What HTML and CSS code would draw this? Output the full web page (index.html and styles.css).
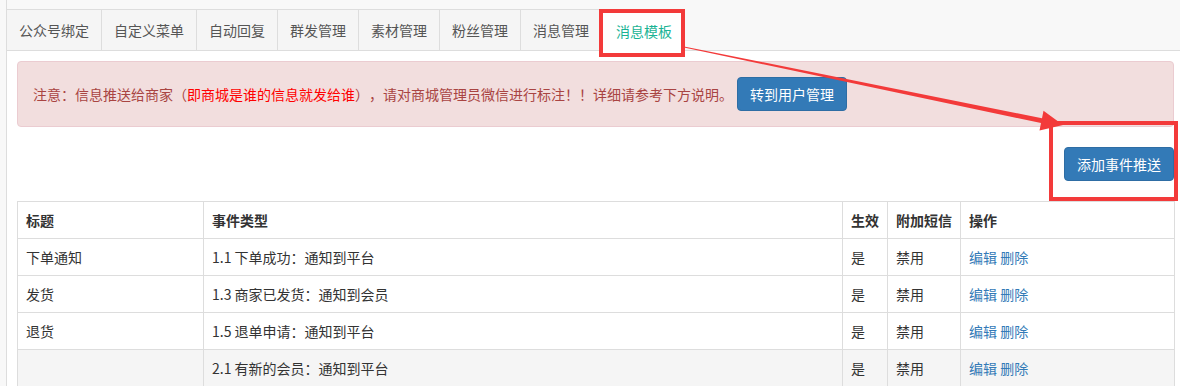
FILE: index.html
```html
<!DOCTYPE html>
<html lang="zh-CN">
<head>
<meta charset="utf-8">
<title>消息模板</title>
<link rel="stylesheet" href="styles.css">
</head>
<body>
<div class="page">
  <ul class="tabs">
    <li class="tab">公众号绑定</li>
    <li class="tab">自定义菜单</li>
    <li class="tab">自动回复</li>
    <li class="tab">群发管理</li>
    <li class="tab">素材管理</li>
    <li class="tab">粉丝管理</li>
    <li class="tab">消息管理</li>
    <li class="tab active">消息模板</li>
  </ul>
  <div class="content">
    <div class="alert">
      <span>注意：信息推送给商家（<span class="hl">即商城是谁的信息就发给谁</span>），请对商城管理员微信进行标注！！详细请参考下方说明。</span>
      <button class="btn">转到用户管理</button>
    </div>
    <div class="toolbar">
      <button class="btn">添加事件推送</button>
    </div>
    <table class="grid">
      <colgroup>
        <col class="c1"><col class="c2"><col class="c3"><col class="c4"><col class="c5">
      </colgroup>
      <thead>
        <tr><th>标题</th><th>事件类型</th><th>生效</th><th>附加短信</th><th>操作</th></tr>
      </thead>
      <tbody>
        <tr><td>下单通知</td><td>1.1 下单成功：通知到平台</td><td>是</td><td>禁用</td><td><a>编辑</a> <a>删除</a></td></tr>
        <tr><td>发货</td><td>1.3 商家已发货：通知到会员</td><td>是</td><td>禁用</td><td><a>编辑</a> <a>删除</a></td></tr>
        <tr><td>退货</td><td>1.5 退单申请：通知到平台</td><td>是</td><td>禁用</td><td><a>编辑</a> <a>删除</a></td></tr>
        <tr class="hover"><td></td><td>2.1 有新的会员：通知到平台</td><td>是</td><td>禁用</td><td><a>编辑</a> <a>删除</a></td></tr>
      </tbody>
    </table>
  </div>
</div>
<svg class="marks" width="1180" height="386" viewBox="0 0 1180 386">
  <rect x="601" y="11" width="82" height="44" fill="none" stroke="#f33a3a" stroke-width="4"/>
  <rect x="1051" y="123" width="125" height="76" fill="none" stroke="#f33a3a" stroke-width="4"/>
  <polygon fill="#f33a3a" points="684,46.5 1042,118.2 1043.5,110.8 1063,125 1039.5,130.4 1041,123 684,47.5"/>
</svg>
</body>
</html>
```
FILE: styles.css
```css
* { box-sizing: border-box; }
html, body { margin: 0; padding: 0; }
body {
  background: #f8f8f8;
  font-family: "Noto Sans CJK SC", "Liberation Sans", sans-serif;
  font-size: 14px;
  color: #333;
  width: 1180px;
  height: 386px;
  overflow: hidden;
  position: relative;
  text-spacing-trim: space-all;
}
.page {
  margin-left: 6px;
  border-left: 1px solid #ddd;
  min-height: 386px;
}
.tabs {
  list-style: none;
  margin: 0;
  padding: 9px 0 0 0;
  display: flex;
  border-bottom: 1px solid #ddd;
  height: 51px;
}
.tab {
  height: 41px;
  padding: 0 12px;
  display: flex;
  align-items: center;
  background: #f5f5f5;
  border-top: 1px solid #ddd;
  border-right: 1px solid #ddd;
  color: #555;
  line-height: 1;
}
.tab.active {
  background: #fff;
  color: #1ab394;
  height: 42px;
  margin-bottom: -1px;
  border-right: none;
  padding: 0 13px 0 14px;
}
.content {
  background: #fff;
  padding: 10px 6px 0 10px;
  min-height: 335px;
}
.alert {
  height: 66px;
  background: #f2dede;
  border: 1px solid #ebccd1;
  border-radius: 4px;
  color: #a94442;
  padding: 0 15px;
  display: flex;
  align-items: center;
  gap: 4px;
}
.hl { color: #f00; }
.btn {
  font-family: inherit;
  font-size: 14px;
  color: #fff;
  background: #337ab7;
  border: 1px solid #2e6da4;
  border-radius: 4px;
  height: 34px;
  width: 110px;
  padding: 0;
  line-height: 1;
}
.toolbar {
  display: flex;
  justify-content: flex-end;
  padding: 20px 0;
}
.grid {
  width: 1157px;
  border-collapse: collapse;
  table-layout: fixed;
}
.c1 { width: 186px; }
.c2 { width: 639px; }
.c3 { width: 45px; }
.c4 { width: 73px; }
.c5 { width: 214px; }
.grid th, .grid td {
  border: 1px solid #ddd;
  height: 37px;
  padding: 0 8px;
  text-align: left;
  vertical-align: middle;
  line-height: 1;
}
.grid th { font-weight: bold; }
.grid tr.hover td { background: #f5f5f5; }
.grid a { color: #337ab7; }
.marks {
  position: absolute;
  left: 0;
  top: 0;
  pointer-events: none;
}
```
